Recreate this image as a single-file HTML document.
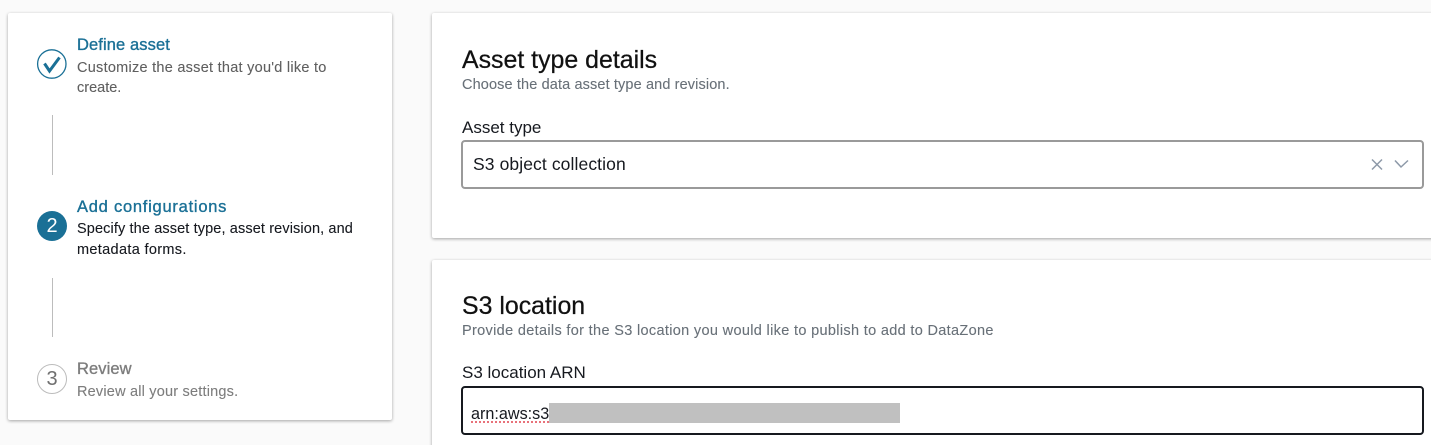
<!DOCTYPE html>
<html>
<head>
<meta charset="utf-8">
<style>
html,body{margin:0;padding:0;width:1431px;height:445px;overflow:hidden;background:#fafafa;font-family:"Liberation Sans",sans-serif}
#p{position:relative;width:1431px;height:445px;overflow:hidden;background:#fafafa}
.t{position:absolute;white-space:nowrap;line-height:20px}
.card{position:absolute;background:#fff;border-radius:2px;box-shadow:0 1px 3px rgba(0,0,0,.35)}
.line{position:absolute;left:52px;width:1px;background:#bcbcbc}
.h{font-size:16.5px;color:#1a7096;-webkit-text-stroke:.35px #1a7096}
.d{font-size:14.5px;color:#5f6b7a;-webkit-text-stroke:.1px currentColor}
.l{font-size:17px;color:#16191f}
.b{font-size:24.9px;line-height:26px;color:#111;-webkit-text-stroke:.25px #111}
</style>
</head>
<body>
<div id="p">
<div class="card" style="left:8px;top:13px;width:384px;height:407px"></div>
<div class="card" style="left:432px;top:13px;width:1010px;height:225px"></div>
<div class="card" style="left:432px;top:260px;width:1010px;height:200px"></div>

<svg style="position:absolute;left:36px;top:48px" width="32" height="32" viewBox="0 0 32 32">
<circle cx="15.8" cy="16" r="14.2" fill="none" stroke="#1a7096" stroke-width="1.3"/>
<path d="M8.5 15.5L13.5 23L23.5 9.5" fill="none" stroke="#1a7096" stroke-width="3"/>
</svg>
<div class="t h" style="left:77px;top:35px;letter-spacing:.1px">Define asset</div>
<div class="t d" style="left:77px;top:57.5px;color:#5f5f5f;letter-spacing:.26px">Customize the asset that you'd like to</div>
<div class="t d" style="left:77px;top:77.5px;color:#5f5f5f">create.</div>
<div class="line" style="top:115px;height:60px"></div>

<div style="position:absolute;left:37px;top:211px;width:30px;height:30px;border-radius:50%;background:#1a7096;color:#fff;font-size:20px;line-height:30px;text-align:center">2</div>
<div class="t h" style="left:77px;top:197px;letter-spacing:.75px">Add configurations</div>
<div class="t d" style="left:77px;top:219px;color:#16191f;letter-spacing:.12px">Specify the asset type, asset revision, and</div>
<div class="t d" style="left:77px;top:239.5px;color:#16191f;letter-spacing:.33px">metadata forms.</div>
<div class="line" style="top:278px;height:59px"></div>

<div style="position:absolute;left:37px;top:364px;width:28px;height:28px;border:1px solid #bcbcbc;border-radius:50%;background:#fff;color:#6f6f6f;font-size:20px;line-height:29px;text-align:center">3</div>
<div class="t h" style="left:77px;top:359px;color:#7d7d7d;-webkit-text-stroke:.35px #7d7d7d;letter-spacing:.1px">Review</div>
<div class="t d" style="left:77px;top:381.5px;color:#7d7d7d;letter-spacing:.2px">Review all your settings.</div>

<div class="t b" style="left:462px;top:47px">Asset type details</div>
<div class="t d" style="left:462px;top:75px;color:#687078;letter-spacing:.125px">Choose the data asset type and revision.</div>
<div class="t l" style="left:462px;top:118px">Asset type</div>
<div style="position:absolute;left:461px;top:140px;width:959px;height:45px;border:2px solid #9a9a9a;border-radius:4px;background:#fff"></div>
<div class="t" style="left:473px;top:154px;font-size:17.5px;color:#16191f;letter-spacing:.1px">S3 object collection</div>
<svg style="position:absolute;left:1368px;top:156px" width="44" height="18" viewBox="0 0 44 18">
<path d="M4 3.5L14 13.5M14 3.5L4 13.5" fill="none" stroke="#8d99a8" stroke-width="1.5"/>
<path d="M27 4.5L33 11L40 4.5" fill="none" stroke="#8d99a8" stroke-width="1.5"/>
</svg>

<div class="t b" style="left:462px;top:293px">S3 location</div>
<div class="t d" style="left:462px;top:320.5px;color:#687078;letter-spacing:.33px">Provide details for the S3 location you would like to publish to add to DataZone</div>
<div class="t l" style="left:462px;top:363px">S3 location ARN</div>
<div style="position:absolute;left:461px;top:386px;width:959px;height:45px;border:2px solid #16191f;border-radius:4px;background:#fff"></div>
<div class="t" style="left:471px;top:404px;font-size:16.2px;color:#16191f">arn:aws:s3</div>
<div style="position:absolute;left:471px;top:421px;width:78px;border-top:2px dotted #e8727a"></div>
<div style="position:absolute;left:549px;top:403px;width:351px;height:20px;background:#c0c0c0"></div>
</div>
</body>
</html>
